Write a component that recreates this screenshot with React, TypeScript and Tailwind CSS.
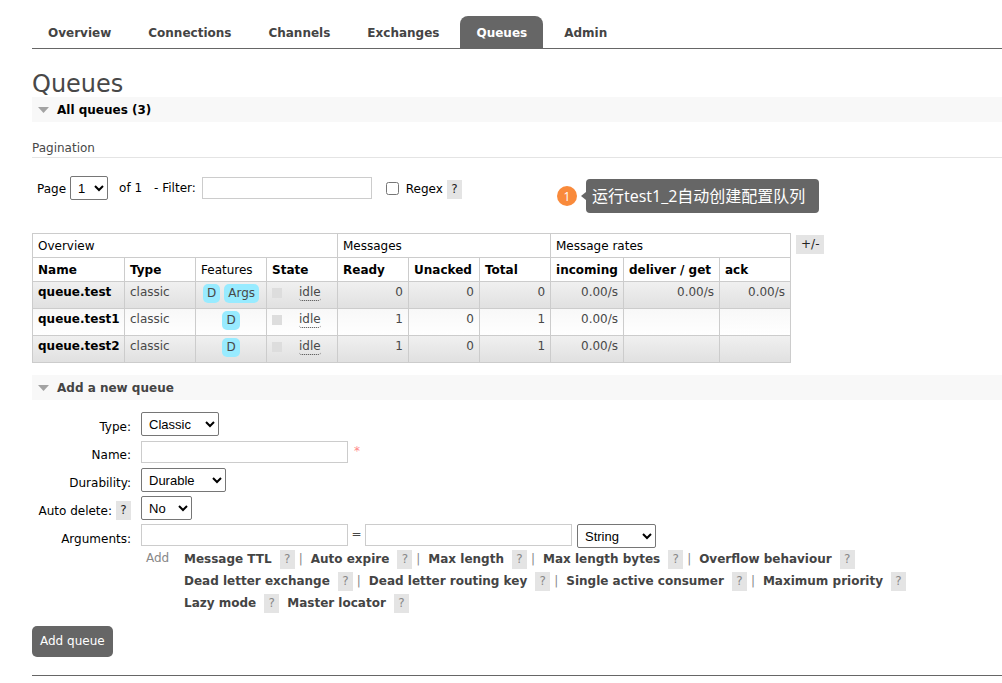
import { useState } from "react";
import type { ReactNode } from "react";

type Queue = {
  name: string;
  type: string;
  features: string[];
  state: string;
  ready: number;
  unacked: number;
  total: number;
  incoming: string;
  deliver: string;
  ack: string;
};

const TABS = [
  "Overview",
  "Connections",
  "Channels",
  "Exchanges",
  "Queues",
  "Admin",
];

const QUEUES: Queue[] = [
  {
    name: "queue.test",
    type: "classic",
    features: ["D", "Args"],
    state: "idle",
    ready: 0,
    unacked: 0,
    total: 0,
    incoming: "0.00/s",
    deliver: "0.00/s",
    ack: "0.00/s",
  },
  {
    name: "queue.test1",
    type: "classic",
    features: ["D"],
    state: "idle",
    ready: 1,
    unacked: 0,
    total: 1,
    incoming: "0.00/s",
    deliver: "",
    ack: "",
  },
  {
    name: "queue.test2",
    type: "classic",
    features: ["D"],
    state: "idle",
    ready: 1,
    unacked: 0,
    total: 1,
    incoming: "0.00/s",
    deliver: "",
    ack: "",
  },
];

const COLUMNS = [
  { label: "Name", width: "w-[92px]", sortable: true },
  { label: "Type", width: "w-[71px]", sortable: true },
  { label: "Features", width: "w-[71px]", sortable: false },
  { label: "State", width: "w-[71px]", sortable: true },
  { label: "Ready", width: "w-[71px]", sortable: true },
  { label: "Unacked", width: "w-[71px]", sortable: true },
  { label: "Total", width: "w-[71px]", sortable: true },
  { label: "incoming", width: "w-[73px]", sortable: true },
  { label: "deliver / get", width: "w-[96px]", sortable: true },
  { label: "ack", width: "w-[71px]", sortable: true },
];

const ARGUMENT_ROWS = [
  [
    "Message TTL",
    "Auto expire",
    "Max length",
    "Max length bytes",
    "Overflow behaviour",
  ],
  [
    "Dead letter exchange",
    "Dead letter routing key",
    "Single active consumer",
    "Maximum priority",
  ],
];

const SELECT =
  "h-6 rounded-xs border border-[#767676] bg-white pl-[3px] font-['Liberation_Sans',Arial,sans-serif] text-[13px] text-black";
const INPUT = "h-[22px] border border-[#ccc] bg-white px-1 text-black";

export default function App() {
  return (
    <div className="overflow-x-hidden bg-white pl-8 pt-4 font-['DejaVu_Sans',Verdana,sans-serif] text-xs leading-[15px] text-[#484848]">
      <nav className="border-b border-[#666]">
        <ul className="flex gap-[5px]">
          {TABS.map((tab) => (
            <li key={tab}>
              <a
                href="#"
                className={`block h-8 rounded-t-lg px-4 font-bold leading-[34px] ${
                  tab === "Queues" ? "bg-[#666] text-white" : "text-[#444]"
                }`}
              >
                {tab}
              </a>
            </li>
          ))}
        </ul>
      </nav>

      <main>
        <h1 className="h-12 pt-[21px] text-2xl leading-7">Queues</h1>
        <SectionTitle dark>All queues (3)</SectionTitle>
        <Pagination />
        <QueueTable />
        <div className="mt-3">
          <SectionTitle>Add a new queue</SectionTitle>
        </div>
        <AddQueueForm />
      </main>

      <footer className="mt-[18px] h-2 border-t border-[#666]" />
    </div>
  );
}

function SectionTitle({
  children,
  dark,
}: {
  children: ReactNode;
  dark?: boolean;
}) {
  return (
    <h2
      className={`flex h-[25px] items-start bg-[#f8f8f8] pl-[6px] font-bold leading-[26px] ${
        dark ? "text-black" : "text-[#444]"
      }`}
    >
      <svg
        width="11"
        height="6"
        viewBox="0 0 11 6"
        className="mr-2 mt-[10px]"
      >
        <path d="M0 0H11L5.5 6Z" fill="#a3a3a3" />
      </svg>
      {children}
    </h2>
  );
}

function Help({ muted }: { muted?: boolean }) {
  return (
    <button
      type="button"
      className={`w-[15px] bg-[#e4e4e4] py-[2px] text-center ${
        muted ? "text-[#888]" : "text-[#222]"
      }`}
    >
      ?
    </button>
  );
}

function Pagination() {
  const [filter, setFilter] = useState("");
  const [regex, setRegex] = useState(false);

  return (
    <section>
      <h3 className="mt-[19px] border-b border-[#e4e4e4] pb-px">Pagination</h3>
      <div className="relative mt-[18px] flex h-6 items-center pl-[5px] text-black">
        <label htmlFor="page" className="pt-[2px]">
          Page
        </label>
        <select id="page" className={`${SELECT} ml-1 w-[38px]`}>
          <option>1</option>
        </select>
        <span className="ml-[11px]">of 1</span>
        <label htmlFor="filter" className="ml-3">
          - Filter:
        </label>
        <input
          id="filter"
          value={filter}
          onChange={(e) => setFilter(e.target.value)}
          className={`${INPUT} ml-[6px] w-[170px]`}
        />
        <input
          id="regex"
          type="checkbox"
          checked={regex}
          onChange={(e) => setRegex(e.target.checked)}
          className="ml-[14px] h-[13px] w-[13px]"
        />
        <span className="ml-[7px] flex items-center gap-1 pt-[2px]">
          <label htmlFor="regex">Regex</label>
          <Help />
        </span>
        <Callout />
      </div>
    </section>
  );
}

// floating note, sits over the pagination bar
function Callout() {
  return (
    <div className="absolute left-[525px] top-[3px] flex items-center">
      <span className="flex h-5 w-5 items-center justify-center rounded-full bg-[#f98a3b] font-['Open_Sans',sans-serif] text-white">
        1
      </span>
      <svg width="5" height="8" viewBox="0 0 5 8" className="ml-1">
        <path d="M5 0V8L0 4Z" fill="#666" />
      </svg>
      <span className="whitespace-nowrap rounded bg-[#666] py-[5px] pl-[6px] pr-[14px] font-['Open_Sans','Noto_Sans_CJK_SC',sans-serif] text-base text-white">
        运行test1_2自动创建配置队列
      </span>
    </div>
  );
}

function QueueTable() {
  const head = "border border-[#ccc] px-[5px] pt-[2px] text-left";
  const cell = "border border-[#ccc] px-[5px] py-[3px] align-top";

  return (
    <div className="mt-[33px] flex items-start gap-[5px]">
      <table className="w-[759px] table-fixed border-collapse">
        <colgroup>
          {COLUMNS.map((c) => (
            <col key={c.label} className={c.width} />
          ))}
        </colgroup>
        <thead className="whitespace-nowrap text-black">
          <tr className="h-6">
            <th colSpan={4} className={`${head} font-normal`}>
              Overview
            </th>
            <th colSpan={3} className={`${head} font-normal`}>
              Messages
            </th>
            <th colSpan={3} className={`${head} font-normal`}>
              Message rates
            </th>
          </tr>
          <tr className="h-6">
            {COLUMNS.map((c) => (
              <th
                key={c.label}
                className={`${head} ${c.sortable ? "font-bold" : "font-normal"}`}
              >
                {c.label}
              </th>
            ))}
          </tr>
        </thead>
        <tbody>
          {QUEUES.map((q, i) => (
            <tr
              key={q.name}
              className={`h-[27px] bg-linear-to-b ${
                i % 2 === 0
                  ? "from-[#f0f0f0] to-[#e0e0e0]"
                  : "from-[#f8f8f8] to-white"
              }`}
            >
              <td className={cell}>
                <a href="#" className="font-bold text-black">
                  {q.name}
                </a>
              </td>
              <td className={cell}>{q.type}</td>
              <td className="border border-[#ccc] pt-[2px] align-top">
                <div className="flex justify-center gap-1">
                  {q.features.map((f) => (
                    <abbr
                      key={f}
                      className="rounded-[5px] bg-[#98ebff] px-1 py-[2px] no-underline"
                    >
                      {f}
                    </abbr>
                  ))}
                </div>
              </td>
              <td className={cell}>
                <div className="flex items-center">
                  <span className="mr-[17px] h-[10px] w-[10px] bg-[#ddd]" />
                  <span className="rounded-[3px] border-b border-dotted border-[#484848]">
                    {q.state}
                  </span>
                </div>
              </td>
              <td className={`${cell} text-right`}>{q.ready}</td>
              <td className={`${cell} text-right`}>{q.unacked}</td>
              <td className={`${cell} text-right`}>{q.total}</td>
              <td className={`${cell} text-right`}>{q.incoming}</td>
              <td className={`${cell} text-right`}>{q.deliver}</td>
              <td className={`${cell} text-right`}>{q.ack}</td>
            </tr>
          ))}
        </tbody>
      </table>
      <button
        type="button"
        className="mt-[2px] bg-[#e4e4e4] px-[5px] py-[2px] text-[#222]"
      >
        +/-
      </button>
    </div>
  );
}

function Field({
  id,
  label,
  help,
  children,
}: {
  id: string;
  label: string;
  help?: boolean;
  children: ReactNode;
}) {
  return (
    <div className="flex h-7 items-start">
      <div className="mr-[10px] flex h-7 w-[99px] shrink-0 items-center justify-end gap-1 whitespace-nowrap text-black">
        <label htmlFor={id} className="pt-[2px]">
          {label}
        </label>
        {help && <Help />}
      </div>
      {children}
    </div>
  );
}

function AddQueueForm() {
  return (
    <form className="mt-3" onSubmit={(e) => e.preventDefault()}>
      <Field id="type" label="Type:">
        <select id="type" className={`${SELECT} w-[78px]`}>
          <option>Classic</option>
          <option>Quorum</option>
        </select>
      </Field>
      <Field id="name" label="Name:">
        <input id="name" className={`${INPUT} mt-px w-[207px]`} />
        <span className="ml-[6px] mt-1 text-[#f88]">*</span>
      </Field>
      <Field id="durability" label="Durability:">
        <select id="durability" className={`${SELECT} w-[85px]`}>
          <option>Durable</option>
          <option>Transient</option>
        </select>
      </Field>
      <Field id="auto-delete" label="Auto delete:" help>
        <select id="auto-delete" className={`${SELECT} w-[51px]`}>
          <option>No</option>
          <option>Yes</option>
        </select>
      </Field>
      <Field id="arg-key" label="Arguments:">
        <input id="arg-key" className={`${INPUT} w-[207px]`} />
        <span className="mt-[3px] w-[17px] text-center">=</span>
        <input
          aria-label="Argument value"
          className={`${INPUT} w-[207px]`}
        />
        <select
          aria-label="Argument type"
          className={`${SELECT} ml-[5px] w-[79px]`}
        >
          <option>String</option>
          <option>Number</option>
          <option>Boolean</option>
          <option>List</option>
        </select>
      </Field>

      <div className="-mt-1 flex pl-[114px] text-[#888]">
        <span className="w-[38px] shrink-0 leading-5">Add</span>
        <div className="whitespace-nowrap">
          {ARGUMENT_ROWS.map((row) => (
            <div key={row[0]} className="flex h-[22px] items-center">
              {row.map((arg, i) => (
                <div key={arg} className="flex items-center">
                  {i > 0 && <span className="w-4 pl-1">|</span>}
                  <ArgumentLink name={arg} />
                </div>
              ))}
            </div>
          ))}
          <div className="flex h-[22px] items-center gap-2">
            <ArgumentLink name="Lazy mode" />
            <ArgumentLink name="Master locator" />
          </div>
        </div>
      </div>

      <button
        type="submit"
        className="mt-3 h-[31px] rounded-[5px] bg-[#666] px-2 text-white"
      >
        Add queue
      </button>
    </form>
  );
}

function ArgumentLink({ name }: { name: string }) {
  return (
    <span className="flex items-center gap-2">
      <button type="button" className="font-bold text-[#444]">
        {name}
      </button>
      <Help muted />
    </span>
  );
}
